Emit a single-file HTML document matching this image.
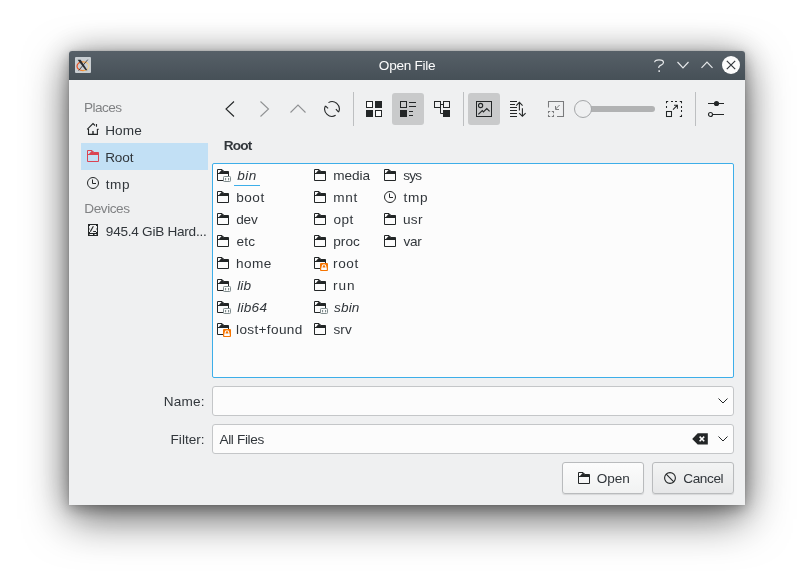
<!DOCTYPE html>
<html><head><meta charset="utf-8">
<style>
*{margin:0;padding:0;box-sizing:border-box}
html,body{width:807px;height:577px;overflow:hidden;background:#fff}
body{position:relative;font-family:"Liberation Sans",sans-serif;font-size:13px;color:#31363b}
.a{position:absolute}
.t{white-space:nowrap;line-height:16px;font-size:13.6px}
.bl{display:inline-block;width:0;height:0;vertical-align:baseline}
#win{left:69px;top:51px;width:676px;height:454px;background:#eff0f1;border-radius:3px 3px 0 0;
 box-shadow:0 14px 44px rgba(0,0,0,.55),0 0 34px rgba(0,0,0,.2),0 4px 14px rgba(0,0,0,.25),0 0 3px rgba(0,0,0,.12)}
#tb{left:69px;top:51px;width:676px;height:29px;background:linear-gradient(#576068,#465057);border-radius:3px 3px 0 0}
.pressed{background:#c9cacb;border-radius:3px}
.sep{width:1px;background:#bdbfc1}
svg{position:absolute;overflow:visible}
</style></head><body>
<div id="root" style="position:absolute;left:0;top:0;width:807px;height:577px;will-change:transform">
<div id="win" class="a"></div>
<div id="tb" class="a"></div>
<div class="a t" id="L_title" style="left:378.85px;top:58.00px;letter-spacing:-0.274px;color:#fcfcfc">Open File<span class="bl"></span></div>
<svg class="a" style="left:75px;top:57px" width="16" height="16" viewBox="0 0 16 16"><defs><linearGradient id="eg" x1="0" x2="1" y1="0" y2="0"><stop offset="0" stop-color="#e6461e"/><stop offset="0.55" stop-color="#f39c3c"/><stop offset="1" stop-color="#f2d9a0"/></linearGradient></defs><rect x="0" y="0" width="16" height="16" rx="1" fill="#c9ced2"/><ellipse cx="8" cy="9.2" rx="6" ry="4.4" fill="none" stroke="url(#eg)" stroke-width="1.2"/><path d="M2.6 2.8H5.6L12.4 13.2H10.6Z" fill="#2a2c2e"/><path d="M12.8 2.6L3.6 13.6" stroke="#2a2c2e" stroke-width="0.8"/></svg>
<svg class="a" style="left:654px;top:58px" width="11" height="15" viewBox="0 0 11 15"><path d="M0.6 4.3C0.8 2.6 2.6 1.8 5 1.8C7.6 1.8 9.5 2.7 9.5 4.4C9.5 6.2 7.2 7 5.6 8C4.9 8.5 4.7 9 4.7 10.1" fill="none" stroke="#e6e8ea" stroke-width="1.2"/><rect x="4.4" y="12.3" width="1.6" height="1.6" fill="#e6e8ea"/></svg>
<svg class="a" style="left:677px;top:61px" width="12" height="8" viewBox="0 0 12 8"><path d="M0.5 1L6 6.8L11.5 1" fill="none" stroke="#e6e8ea" stroke-width="1.2"/></svg>
<svg class="a" style="left:701px;top:61px" width="12" height="8" viewBox="0 0 12 8"><path d="M0.5 6.8L6 1L11.5 6.8" fill="none" stroke="#e6e8ea" stroke-width="1.2"/></svg>
<svg class="a" style="left:722px;top:56px" width="18" height="18" viewBox="0 0 18 18"><circle cx="9" cy="9" r="9" fill="#fcfcfc"/><path d="M4.8 4.8L13.2 13.2M13.2 4.8L4.8 13.2" stroke="#31363b" stroke-width="1.2"/></svg>
<div class="a t" id="L_Places" style="left:84.06px;top:100.00px;letter-spacing:-0.537px;color:#808284">Places<span class="bl"></span></div>
<div class="a" style="left:81px;top:143px;width:127px;height:27px;background:#c2e0f5"></div>
<svg class="a" style="left:87px;top:123px" width="12" height="12" viewBox="0 0 12 12"><path d="M0.2 6.3L6 0.5L8 2.5M9.5 1V3.7M10.4 6.3H11.8M0.2 6.3H1.5M1.5 6V11.4H10.4V6" fill="none" stroke="#232627" stroke-width="1.1"/><path d="M6 8V11" stroke="#232627" stroke-width="1.4"/></svg>
<div class="a t" id="L_Home" style="left:105.17px;top:123.00px;letter-spacing:0.094px;">Home<span class="bl"></span></div>
<svg class="a" style="left:87px;top:150px" width="12" height="12" viewBox="0 0 12 12"><path d="M0.5 11.5V0.5H5L7 2.5H11.5V11.5Z M0.5 4.5H11.5" fill="none" stroke="#da4453"/><path d="M5 0.5L7 2.5H11.5V4.5H1.5L4.6 1Z" fill="#da4453"/></svg><div class="a t" id="L_sbRoot" style="left:105.17px;top:150.00px;letter-spacing:-0.154px;">Root<span class="bl"></span></div>
<svg class="a" style="left:87px;top:177px" width="12" height="12" viewBox="0 0 12 12"><circle cx="6" cy="6" r="5.5" fill="none" stroke="#232627"/><path d="M5.5 2.5V6.5H9" fill="none" stroke="#232627"/></svg><div class="a t" id="L_sbtmp" style="left:105.81px;top:177.00px;letter-spacing:0.550px;">tmp<span class="bl"></span></div>
<div class="a t" id="L_Devices" style="left:84.34px;top:201.00px;letter-spacing:-0.445px;color:#808284">Devices<span class="bl"></span></div>
<svg class="a" style="left:88px;top:224px" width="10" height="12" viewBox="0 0 10 12"><rect x="0.5" y="0.5" width="9" height="11" fill="none" stroke="#232627"/><path d="M1 1H2V2H1ZM8 1H9V2H8ZM1 8H2V9H1ZM8 8H9V9H8ZM1 4.5H1.7V5.5H1ZM8.3 4.5H9V5.5H8.3Z" fill="#232627"/><path d="M0 9H10V12H0ZM1.5 10V11H5V10ZM6.5 10V11H8.5V10Z" fill="#232627" fill-rule="evenodd"/><path d="M2.3 7.6L5.4 2.3" stroke="#232627" stroke-width="1.1"/><path d="M5.2 7.5H8" stroke="#232627" stroke-width="1"/></svg>
<div class="a t" id="L_drive" style="left:105.84px;top:224.00px;letter-spacing:-0.260px;">945.4 GiB Hard...<span class="bl"></span></div>

<svg class="a" style="left:225px;top:101px" width="10" height="16" viewBox="0 0 10 16"><path d="M9 0.5L1 8L9 15.5" fill="none" stroke="#232627" stroke-width="1.1"/></svg>
<svg class="a" style="left:260px;top:101px" width="10" height="16" viewBox="0 0 10 16"><path d="M0.5 0.5L8.5 8L0.5 15.5" fill="none" stroke="#8f9193" stroke-width="1.1"/></svg>
<svg class="a" style="left:290px;top:104px" width="16" height="10" viewBox="0 0 16 10"><path d="M0.5 8.5L8 1L15.5 8.5" fill="none" stroke="#8f9193" stroke-width="1.1"/></svg>
<svg class="a" style="left:324px;top:101px" width="16" height="16" viewBox="0 0 16 16"><path d="M4.46 1.61A7.3 7.3 0 0 1 14.61 11.09M11.9 8.2L14.61 11.09M11.65 14.32A7.3 7.3 0 0 1 1.39 4.91M4.1 7.4L1.39 4.91" fill="none" stroke="#232627" stroke-width="1.1"/></svg>
<div class="a sep" style="left:353px;top:92px;height:34px"></div>
<svg class="a" style="left:366px;top:101px" width="16" height="16" viewBox="0 0 16 16"><rect x="0.5" y="0.5" width="6" height="6" fill="#fcfcfc" stroke="#232627"/><rect x="9" y="0" width="7" height="7" fill="#232627"/><rect x="0" y="9" width="7" height="7" fill="#232627"/><rect x="9.5" y="9.5" width="6" height="6" fill="#fcfcfc" stroke="#232627"/></svg>
<div class="a pressed" style="left:392px;top:93px;width:32px;height:32px"></div>
<svg class="a" style="left:400px;top:101px" width="16" height="16" viewBox="0 0 16 16"><rect x="0.5" y="0.5" width="6" height="6" fill="none" stroke="#232627"/><rect x="0" y="9" width="7" height="7" fill="#232627"/><path d="M9 1.5H16M9 5.5H16M9 10.5H13M9 14.5H13" stroke="#232627"/></svg>
<svg class="a" style="left:434px;top:101px" width="16" height="16" viewBox="0 0 16 16"><rect x="0.5" y="0.5" width="6" height="6" fill="none" stroke="#232627"/><rect x="9.5" y="0.5" width="6" height="6" fill="none" stroke="#232627"/><rect x="9" y="9" width="7" height="7" fill="#232627"/><path d="M7 3.5H9M6.5 7V12.5H9" fill="none" stroke="#232627"/></svg>
<div class="a sep" style="left:463px;top:92px;height:34px"></div>
<div class="a pressed" style="left:468px;top:93px;width:32px;height:32px"></div>
<svg class="a" style="left:476px;top:101px" width="16" height="16" viewBox="0 0 16 16"><rect x="0.5" y="0.5" width="15" height="15" fill="none" stroke="#232627"/><circle cx="4.6" cy="4.5" r="2.1" fill="none" stroke="#232627" stroke-width="1.1"/><path d="M2.3 13.4L6.3 9.6L7.4 10.9L10.8 7.5L13.6 10.3" fill="none" stroke="#232627" stroke-width="1.1"/></svg>
<svg class="a" style="left:510px;top:101px" width="16" height="16" viewBox="0 0 16 16"><path d="M0 0.5H7M0 3.5H5M0 6.5H7M0 9.5H7M0 12.5H7M0 15.5H7" stroke="#232627"/><path d="M9.4 1.5V9.6M6.2 4.6L9.4 1.4L12.6 4.6M12.4 7.2V15.2M9.2 12.1L12.4 15.3L15.6 12.1" fill="none" stroke="#232627" stroke-width="1.1"/></svg>
<svg class="a" style="left:548px;top:101px" width="16" height="16" viewBox="0 0 16 16"><path d="M0.5 6.5V0.5H15.5V15.5H9" fill="none" stroke="#7a7b7d" stroke-width="1.05"/><path d="M0.5 12.2V10.5H2.2M3.8 10.5H5.5V12.2M5.5 13.8V15.5H3.8M2.2 15.5H0.5V13.8" fill="none" stroke="#7a7b7d" stroke-width="1.05"/><path d="M11.6 4L7.6 8M7.5 5V8.5H11" fill="none" stroke="#7a7b7d" stroke-width="1"/></svg>
<div class="a" style="left:585px;top:106px;width:70px;height:6px;border-radius:3px;background:#b1b2b3"></div>
<svg class="a" style="left:574px;top:100px" width="18" height="18" viewBox="0 0 18 18"><circle cx="9" cy="9" r="8.5" fill="#eff0f1" stroke="#a3a5a7"/></svg>
<svg class="a" style="left:666px;top:101px" width="16" height="16" viewBox="0 0 16 16"><path d="M0.5 2.2V0.5H2.2M5 0.5H7M9 0.5H11M13.8 0.5H15.5V2.2M0.5 5V7M15.5 5V7M15.5 9V11M15.5 13.8V15.5H13.8" fill="none" stroke="#232627" stroke-width="1.05"/><rect x="0.5" y="10.5" width="5" height="5" fill="none" stroke="#232627" stroke-width="1.05"/><path d="M7 8.6L11.2 4.4M8 4.3H11.4V7.7" fill="none" stroke="#232627" stroke-width="1.05"/></svg>
<div class="a sep" style="left:695px;top:92px;height:34px"></div>
<svg class="a" style="left:708px;top:101px" width="16" height="16" viewBox="0 0 16 16"><path d="M0 2.5H16M4.5 13.5H16" stroke="#232627"/><circle cx="8.5" cy="2.5" r="2.6" fill="#232627"/><circle cx="2.5" cy="13.5" r="2.0" fill="#eff0f1" stroke="#232627" stroke-width="1.15"/></svg>
<div class="a t" id="L_hdr" style="left:223.68px;top:138.00px;letter-spacing:-0.779px;font-weight:bold">Root<span class="bl"></span></div>
<div class="a" style="left:212px;top:163px;width:522px;height:215px;background:#fcfcfc;border:1px solid #3daee9;border-radius:2px"></div>
<svg class="a" style="left:217px;top:169px" width="12" height="12" viewBox="0 0 12 12"><path d="M0.5 11.5V0.5H5L7 2.5H11.5V11.5Z M0.5 4.5H11.5" fill="none" stroke="#232627"/><path d="M5 0.5L7 2.5H11.5V4.5H1.5L4.6 1Z" fill="#232627"/></svg><svg class="a" style="left:223px;top:176px" width="8" height="6" viewBox="0 0 8 6"><rect x="0.5" y="0.5" width="7" height="5" rx="0.8" fill="#fcfcfc" stroke="#7f8c8d"/><rect x="2" y="2" width="1.1" height="2.3" fill="#7f8c8d"/><rect x="5" y="2" width="1.1" height="2.3" fill="#7f8c8d"/></svg><div class="a t" id="L_c0r0" style="left:237.36px;top:168.00px;letter-spacing:0.347px;font-style:italic">bin<span class="bl"></span></div>
<svg class="a" style="left:217px;top:191px" width="12" height="12" viewBox="0 0 12 12"><path d="M0.5 11.5V0.5H5L7 2.5H11.5V11.5Z M0.5 4.5H11.5" fill="none" stroke="#232627"/><path d="M5 0.5L7 2.5H11.5V4.5H1.5L4.6 1Z" fill="#232627"/></svg><div class="a t" id="L_c0r1" style="left:236.18px;top:190.00px;letter-spacing:0.530px;">boot<span class="bl"></span></div>
<svg class="a" style="left:217px;top:213px" width="12" height="12" viewBox="0 0 12 12"><path d="M0.5 11.5V0.5H5L7 2.5H11.5V11.5Z M0.5 4.5H11.5" fill="none" stroke="#232627"/><path d="M5 0.5L7 2.5H11.5V4.5H1.5L4.6 1Z" fill="#232627"/></svg><div class="a t" id="L_c0r2" style="left:236.34px;top:212.00px;letter-spacing:-0.275px;">dev<span class="bl"></span></div>
<svg class="a" style="left:217px;top:235px" width="12" height="12" viewBox="0 0 12 12"><path d="M0.5 11.5V0.5H5L7 2.5H11.5V11.5Z M0.5 4.5H11.5" fill="none" stroke="#232627"/><path d="M5 0.5L7 2.5H11.5V4.5H1.5L4.6 1Z" fill="#232627"/></svg><div class="a t" id="L_c0r3" style="left:236.44px;top:234.00px;letter-spacing:0.204px;">etc<span class="bl"></span></div>
<svg class="a" style="left:217px;top:257px" width="12" height="12" viewBox="0 0 12 12"><path d="M0.5 11.5V0.5H5L7 2.5H11.5V11.5Z M0.5 4.5H11.5" fill="none" stroke="#232627"/><path d="M5 0.5L7 2.5H11.5V4.5H1.5L4.6 1Z" fill="#232627"/></svg><div class="a t" id="L_c0r4" style="left:236.07px;top:256.00px;letter-spacing:0.435px;">home<span class="bl"></span></div>
<svg class="a" style="left:217px;top:279px" width="12" height="12" viewBox="0 0 12 12"><path d="M0.5 11.5V0.5H5L7 2.5H11.5V11.5Z M0.5 4.5H11.5" fill="none" stroke="#232627"/><path d="M5 0.5L7 2.5H11.5V4.5H1.5L4.6 1Z" fill="#232627"/></svg><svg class="a" style="left:223px;top:286px" width="8" height="6" viewBox="0 0 8 6"><rect x="0.5" y="0.5" width="7" height="5" rx="0.8" fill="#fcfcfc" stroke="#7f8c8d"/><rect x="2" y="2" width="1.1" height="2.3" fill="#7f8c8d"/><rect x="5" y="2" width="1.1" height="2.3" fill="#7f8c8d"/></svg><div class="a t" id="L_c0r5" style="left:237.23px;top:278.00px;letter-spacing:0.110px;font-style:italic">lib<span class="bl"></span></div>
<svg class="a" style="left:217px;top:301px" width="12" height="12" viewBox="0 0 12 12"><path d="M0.5 11.5V0.5H5L7 2.5H11.5V11.5Z M0.5 4.5H11.5" fill="none" stroke="#232627"/><path d="M5 0.5L7 2.5H11.5V4.5H1.5L4.6 1Z" fill="#232627"/></svg><svg class="a" style="left:223px;top:308px" width="8" height="6" viewBox="0 0 8 6"><rect x="0.5" y="0.5" width="7" height="5" rx="0.8" fill="#fcfcfc" stroke="#7f8c8d"/><rect x="2" y="2" width="1.1" height="2.3" fill="#7f8c8d"/><rect x="5" y="2" width="1.1" height="2.3" fill="#7f8c8d"/></svg><div class="a t" id="L_c0r6" style="left:237.22px;top:300.00px;letter-spacing:0.252px;font-style:italic">lib64<span class="bl"></span></div>
<svg class="a" style="left:217px;top:323px" width="12" height="12" viewBox="0 0 12 12"><path d="M0.5 11.5V0.5H5L7 2.5H11.5V11.5Z M0.5 4.5H11.5" fill="none" stroke="#232627"/><path d="M5 0.5L7 2.5H11.5V4.5H1.5L4.6 1Z" fill="#232627"/></svg><svg class="a" style="left:223px;top:329px" width="8" height="8" viewBox="0 0 8 8"><rect x="0" y="0" width="8" height="8" rx="1" fill="#f67400"/><rect x="1.2" y="4.5" width="5.6" height="2.5" fill="#fcfcfc"/><path d="M2.2 4.7V3.6A1.8 1.8 0 0 1 5.8 3.6V4.7" fill="none" stroke="#fcfcfc" stroke-width="1.1"/></svg><div class="a t" id="L_c0r7" style="left:236.07px;top:322.00px;letter-spacing:0.341px;">lost+found<span class="bl"></span></div>
<svg class="a" style="left:314px;top:169px" width="12" height="12" viewBox="0 0 12 12"><path d="M0.5 11.5V0.5H5L7 2.5H11.5V11.5Z M0.5 4.5H11.5" fill="none" stroke="#232627"/><path d="M5 0.5L7 2.5H11.5V4.5H1.5L4.6 1Z" fill="#232627"/></svg><div class="a t" id="L_c1r0" style="left:333.26px;top:168.00px;letter-spacing:-0.064px;">media<span class="bl"></span></div>
<svg class="a" style="left:314px;top:191px" width="12" height="12" viewBox="0 0 12 12"><path d="M0.5 11.5V0.5H5L7 2.5H11.5V11.5Z M0.5 4.5H11.5" fill="none" stroke="#232627"/><path d="M5 0.5L7 2.5H11.5V4.5H1.5L4.6 1Z" fill="#232627"/></svg><div class="a t" id="L_c1r1" style="left:333.25px;top:190.00px;letter-spacing:0.625px;">mnt<span class="bl"></span></div>
<svg class="a" style="left:314px;top:213px" width="12" height="12" viewBox="0 0 12 12"><path d="M0.5 11.5V0.5H5L7 2.5H11.5V11.5Z M0.5 4.5H11.5" fill="none" stroke="#232627"/><path d="M5 0.5L7 2.5H11.5V4.5H1.5L4.6 1Z" fill="#232627"/></svg><div class="a t" id="L_c1r2" style="left:333.58px;top:212.00px;letter-spacing:0.357px;">opt<span class="bl"></span></div>
<svg class="a" style="left:314px;top:235px" width="12" height="12" viewBox="0 0 12 12"><path d="M0.5 11.5V0.5H5L7 2.5H11.5V11.5Z M0.5 4.5H11.5" fill="none" stroke="#232627"/><path d="M5 0.5L7 2.5H11.5V4.5H1.5L4.6 1Z" fill="#232627"/></svg><div class="a t" id="L_c1r3" style="left:333.20px;top:234.00px;letter-spacing:0.054px;">proc<span class="bl"></span></div>
<svg class="a" style="left:314px;top:257px" width="12" height="12" viewBox="0 0 12 12"><path d="M0.5 11.5V0.5H5L7 2.5H11.5V11.5Z M0.5 4.5H11.5" fill="none" stroke="#232627"/><path d="M5 0.5L7 2.5H11.5V4.5H1.5L4.6 1Z" fill="#232627"/></svg><svg class="a" style="left:320px;top:263px" width="8" height="8" viewBox="0 0 8 8"><rect x="0" y="0" width="8" height="8" rx="1" fill="#f67400"/><rect x="1.2" y="4.5" width="5.6" height="2.5" fill="#fcfcfc"/><path d="M2.2 4.7V3.6A1.8 1.8 0 0 1 5.8 3.6V4.7" fill="none" stroke="#fcfcfc" stroke-width="1.1"/></svg><div class="a t" id="L_c1r4" style="left:333.12px;top:256.00px;letter-spacing:0.581px;">root<span class="bl"></span></div>
<svg class="a" style="left:314px;top:279px" width="12" height="12" viewBox="0 0 12 12"><path d="M0.5 11.5V0.5H5L7 2.5H11.5V11.5Z M0.5 4.5H11.5" fill="none" stroke="#232627"/><path d="M5 0.5L7 2.5H11.5V4.5H1.5L4.6 1Z" fill="#232627"/></svg><div class="a t" id="L_c1r5" style="left:333.12px;top:278.00px;letter-spacing:0.936px;">run<span class="bl"></span></div>
<svg class="a" style="left:314px;top:301px" width="12" height="12" viewBox="0 0 12 12"><path d="M0.5 11.5V0.5H5L7 2.5H11.5V11.5Z M0.5 4.5H11.5" fill="none" stroke="#232627"/><path d="M5 0.5L7 2.5H11.5V4.5H1.5L4.6 1Z" fill="#232627"/></svg><svg class="a" style="left:320px;top:308px" width="8" height="6" viewBox="0 0 8 6"><rect x="0.5" y="0.5" width="7" height="5" rx="0.8" fill="#fcfcfc" stroke="#7f8c8d"/><rect x="2" y="2" width="1.1" height="2.3" fill="#7f8c8d"/><rect x="5" y="2" width="1.1" height="2.3" fill="#7f8c8d"/></svg><div class="a t" id="L_c1r6" style="left:334.02px;top:300.00px;letter-spacing:0.157px;font-style:italic">sbin<span class="bl"></span></div>
<svg class="a" style="left:314px;top:323px" width="12" height="12" viewBox="0 0 12 12"><path d="M0.5 11.5V0.5H5L7 2.5H11.5V11.5Z M0.5 4.5H11.5" fill="none" stroke="#232627"/><path d="M5 0.5L7 2.5H11.5V4.5H1.5L4.6 1Z" fill="#232627"/></svg><div class="a t" id="L_c1r7" style="left:333.45px;top:322.00px;letter-spacing:0.101px;">srv<span class="bl"></span></div>
<svg class="a" style="left:384px;top:169px" width="12" height="12" viewBox="0 0 12 12"><path d="M0.5 11.5V0.5H5L7 2.5H11.5V11.5Z M0.5 4.5H11.5" fill="none" stroke="#232627"/><path d="M5 0.5L7 2.5H11.5V4.5H1.5L4.6 1Z" fill="#232627"/></svg><div class="a t" id="L_c2r0" style="left:403.24px;top:168.00px;letter-spacing:-0.773px;">sys<span class="bl"></span></div>
<svg class="a" style="left:384px;top:191px" width="12" height="12" viewBox="0 0 12 12"><circle cx="6" cy="6" r="5.5" fill="none" stroke="#232627"/><path d="M5.5 2.5V6.5H9" fill="none" stroke="#232627"/></svg><div class="a t" id="L_c2r1" style="left:403.50px;top:190.00px;letter-spacing:0.694px;">tmp<span class="bl"></span></div>
<svg class="a" style="left:384px;top:213px" width="12" height="12" viewBox="0 0 12 12"><path d="M0.5 11.5V0.5H5L7 2.5H11.5V11.5Z M0.5 4.5H11.5" fill="none" stroke="#232627"/><path d="M5 0.5L7 2.5H11.5V4.5H1.5L4.6 1Z" fill="#232627"/></svg><div class="a t" id="L_c2r2" style="left:402.97px;top:212.00px;letter-spacing:0.336px;">usr<span class="bl"></span></div>
<svg class="a" style="left:384px;top:235px" width="12" height="12" viewBox="0 0 12 12"><path d="M0.5 11.5V0.5H5L7 2.5H11.5V11.5Z M0.5 4.5H11.5" fill="none" stroke="#232627"/><path d="M5 0.5L7 2.5H11.5V4.5H1.5L4.6 1Z" fill="#232627"/></svg><div class="a t" id="L_c2r3" style="left:403.41px;top:234.00px;letter-spacing:-0.234px;">var<span class="bl"></span></div>
<div class="a" style="left:234px;top:184.5px;width:26px;height:1.5px;background:#3daee9"></div>
<div class="a t" id="L_name" style="left:163.84px;top:394.00px;letter-spacing:0.183px;">Name:<span class="bl"></span></div>
<div class="a" style="left:212px;top:386px;width:522px;height:30px;background:#fcfcfc;border:1px solid #c4c6c8;border-radius:3px"></div>
<svg class="a" style="left:718px;top:398px" width="10" height="6" viewBox="0 0 10 6"><path d="M0.5 0.5L5 5L9.5 0.5" fill="none" stroke="#232627"/></svg>
<div class="a t" id="L_filter" style="left:170.55px;top:432.00px;letter-spacing:0.012px;">Filter:<span class="bl"></span></div>
<div class="a" style="left:212px;top:424px;width:522px;height:30px;background:#fcfcfc;border:1px solid #c4c6c8;border-radius:3px"></div>
<div class="a t" id="L_allfiles" style="left:219.42px;top:432.00px;letter-spacing:-0.337px;">All Files<span class="bl"></span></div>
<svg class="a" style="left:692px;top:433px" width="16" height="12" viewBox="0 0 16 12"><path d="M0.2 5.9L5.7 0.2H15.8V11.6H5.7Z" fill="#232627"/><path d="M7.6 3.6L12.2 8.2M12.2 3.6L7.6 8.2" stroke="#fcfcfc" stroke-width="1.5"/></svg>
<svg class="a" style="left:718px;top:436px" width="10" height="6" viewBox="0 0 10 6"><path d="M0.5 0.5L5 5L9.5 0.5" fill="none" stroke="#232627"/></svg>
<div class="a" style="left:562px;top:462px;width:82px;height:32px;background:linear-gradient(#fcfcfc,#f1f2f2);border:1px solid #b9bbbd;border-radius:3px;box-shadow:0 1px 1px rgba(0,0,0,.1)"></div>
<div class="a" style="left:652px;top:462px;width:82px;height:32px;background:linear-gradient(#f3f4f4,#e6e7e8);border:1px solid #b9bbbd;border-radius:3px;box-shadow:0 1px 1px rgba(0,0,0,.1)"></div>
<svg class="a" style="left:578px;top:472px" width="12" height="12" viewBox="0 0 12 12"><path d="M0.5 11.5V0.5H5L7 2.5H11.5V11.5Z M0.5 4.5H11.5" fill="none" stroke="#232627"/><path d="M5 0.5L7 2.5H11.5V4.5H1.5L4.6 1Z" fill="#232627"/></svg>
<div class="a t" id="L_open" style="left:596.77px;top:471.00px;letter-spacing:-0.056px;">Open<span class="bl"></span></div>
<svg class="a" style="left:664px;top:472px" width="12" height="12" viewBox="0 0 12 12"><circle cx="6" cy="6" r="5.4" fill="none" stroke="#232627" stroke-width="1.1"/><path d="M2.2 2.2L9.8 9.8" stroke="#232627" stroke-width="1.1"/></svg>
<div class="a t" id="L_cancel" style="left:683.21px;top:471.00px;letter-spacing:-0.387px;">Cancel<span class="bl"></span></div>
</div></body></html>
